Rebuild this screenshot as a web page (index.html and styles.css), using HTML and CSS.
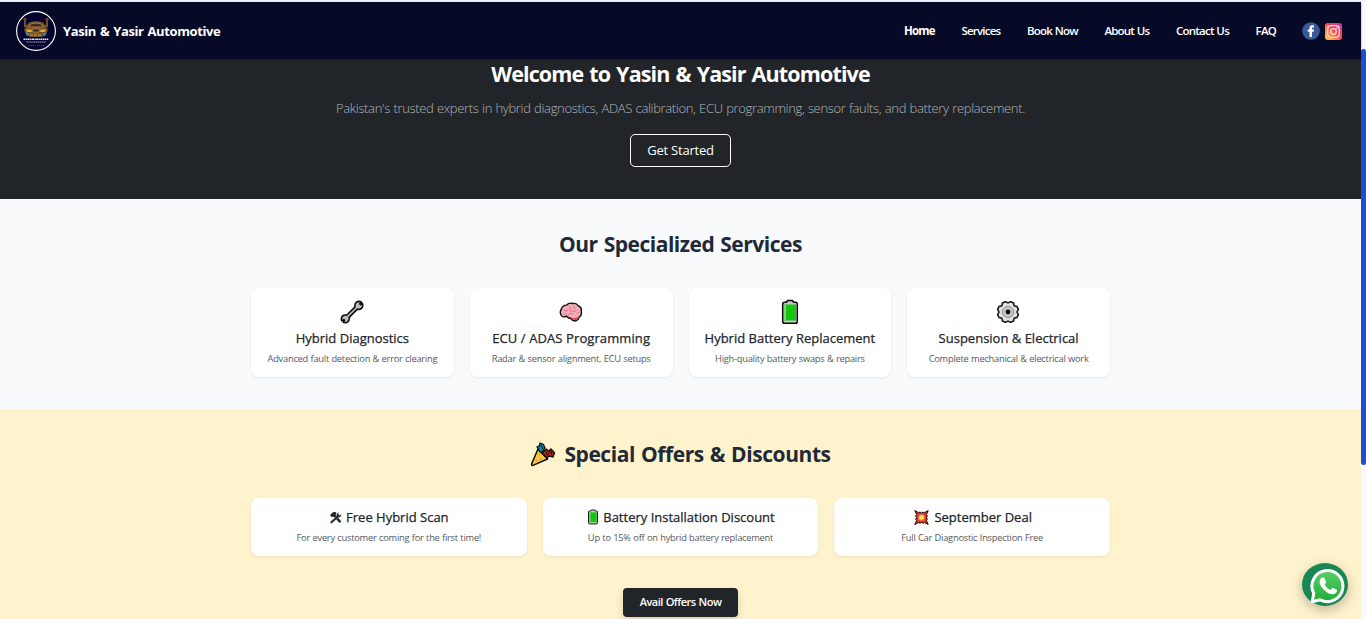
FILE: index.html
```html
<!DOCTYPE html>
<html lang="en">
<head>
<meta charset="utf-8">
<title>Yasin &amp; Yasir Automotive</title>
<link rel="stylesheet" href="styles.css">
</head>
<body>
<svg class="defs" width="0" height="0" aria-hidden="true">
  <symbol id="battery" viewBox="0 0 24 26">
    <path d="M6.500 3.200H8.500L9.500 1.500H14.500L15.500 3.200H17.500Q19.300 3.200 19.300 5V22.500Q19.300 24.300 17.500 24.300H6.500Q4.700 24.300 4.700 22.500V5Q4.700 3.200 6.500 3.200Z" fill="#c9c9c9" stroke="#0b0b0b" stroke-width="1.500"/>
    <rect x="6" y="5.500" width="12" height="16" fill="#16c60c"/>
    <rect x="6" y="5.500" width="2" height="16" fill="#7ed67a"/>
  </symbol>
</svg>
<div class="window">
  <div class="page">
    <header class="navbar">
      <a class="brand">
        <svg class="logo" viewBox="0 0 40 40">
          <circle cx="20" cy="20" r="19.400" fill="#03022e" stroke="#fff" stroke-width="1.100"/>
          <path d="M9 9V16M31 9V16" stroke="#a96c22" stroke-width="1.400"/>
          <path d="M7.500 8H10.500M29.500 8H32.500M9 14L13 18M31 14L27 18" stroke="#8d5a30" stroke-width="1.500"/>
          <path d="M13 11.500Q20 9 27 11.500L30 15L32 19L29.500 24.500L26 26H14L10.500 24.500L8 19L10 15Z" fill="#6d522f"/>
          <path d="M14.500 13Q20 10.800 25.500 13L27.500 16H12.500Z" fill="#3a2d2c" stroke="#c68128" stroke-width=".9"/>
          <path d="M10 18.500H15L16.500 21H11ZM30 18.500H25L23.500 21H29Z" fill="#f4a01e"/>
          <path d="M9 21.500L14 22.500L11.500 25ZM31 21.500L26 22.500L28.500 25Z" fill="#2788dc"/>
          <path d="M16 18H24L23 21H17Z" fill="#2d2a35" stroke="#c7832a" stroke-width=".8"/>
          <path d="M14 24H26" stroke="#e59a28" stroke-width="1" stroke-dasharray="3 1"/>
          <path d="M7.500 28.300H32.500" stroke="#e7e7f0" stroke-width="1.600" stroke-dasharray="2 .5 1.300 .4"/>
          <path d="M10.500 31H30" stroke="#aeb0c7" stroke-width="1.100" stroke-dasharray="1.400 .5"/>
          <path d="M12.500 34.500H19M21 34.500H29" stroke="#6e4824" stroke-width=".8" stroke-dasharray="1.500 .5"/>
        </svg>
        <span class="brand-name">Yasin &amp; Yasir Automotive</span>
      </a>
      <nav class="links">
        <a class="link home">Home</a>
        <a class="link">Services</a>
        <a class="link">Book Now</a>
        <a class="link">About Us</a>
        <a class="link">Contact Us</a>
        <a class="link">FAQ</a>
      </nav>
      <div class="social">
        <svg width="18" height="18" viewBox="0 0 18 18"><circle cx="9" cy="9" r="8.800" fill="#3b5998"/><path d="M7.500 15V9.800H5.800V7.500H7.500V6Q7.500 3.300 10.200 3.300H12V5.500H10.900Q10 5.500 10 6.400V7.500H12L11.700 9.800H10V15Z" fill="#fff"/></svg>
        <svg width="17" height="17" viewBox="0 0 17 17"><defs><linearGradient id="ig" x1="0" y1="1" x2="1" y2="0"><stop offset="0" stop-color="#ffd152"/><stop offset=".3" stop-color="#ff8a45"/><stop offset=".58" stop-color="#fb4350"/><stop offset="1" stop-color="#b936b8"/></linearGradient></defs><rect width="17" height="17" rx="3" fill="url(#ig)"/><rect x="2.700" y="2.700" width="11.600" height="11.600" rx="3.500" fill="none" stroke="#ffe3e0" stroke-width="1.200"/><circle cx="8.500" cy="8.500" r="2.800" fill="none" stroke="#ffe3e0" stroke-width="1.200"/><circle cx="12" cy="5" r=".8" fill="#fff"/></svg>
      </div>
    </header>

    <section class="hero">
      <h1>Welcome to Yasin &amp; Yasir Automotive</h1>
      <p class="lead">Pakistan's trusted experts in hybrid diagnostics, ADAS calibration, ECU programming, sensor faults, and battery replacement.</p>
      <a class="start"><span>Get Started</span></a>
    </section>

    <section class="services">
      <h2 class="services-title">Our Specialized Services</h2>
      <div class="cards four">
        <article class="card">
          <svg class="icon" viewBox="0 0 26 26"><path d="M18 2.200Q20.500 .8 23 2.200L21.400 4.200L22.300 5L24.200 3.500Q25.500 7 23.300 9Q21.400 10.700 18.800 9.900L9.900 18.800Q10.600 21.700 8.600 23.500Q6.500 25.400 3.500 24.200L4.900 22L4.200 21.300L2 22.600Q.7 19.500 2.700 17.500Q4.600 15.700 7.200 16.500L16.300 7.400Q15.500 4 18 2.200Z" fill="#bdbdbd" stroke="#0b0b0b" stroke-width="1.700" stroke-linejoin="round"/></svg>
          <h3>Hybrid Diagnostics</h3>
          <p>Advanced fault detection &amp; error clearing</p>
        </article>
        <article class="card">
          <svg class="icon" viewBox="0 0 26 26"><path d="M8 17.500Q4 19.500 2.300 16.500Q.4 13 2.500 10Q4 5.500 8 5.600Q11 2.500 14.800 3.800Q19 3 20.700 6.200Q24.800 8 24.100 12Q25.200 16 22 18.500Q20.500 22.500 17 22.800Q13.500 22 12.800 20Q10 19.500 8 17.500Z" fill="#f4abba" stroke="#0b0b0b" stroke-width="1.500"/><path d="M13.500 19.200Q17.500 20.200 22 18Q20.400 22 17 22Q14.500 21.600 13.500 19.200Z" fill="#e74856"/><path d="M5 11Q8 13 10 10M11 6Q13 8 12 11Q15 14 19 11M16 6Q15 9 18 9M10 17Q12 13 15 15.500M19 15L22 13M5 15Q7 14 8 16" fill="none" stroke="#e4798d" stroke-width="1.100"/></svg>
          <h3 class="wide">ECU / ADAS Programming</h3>
          <p>Radar &amp; sensor alignment, ECU setups</p>
        </article>
        <article class="card">
          <svg class="icon"><use href="#battery"/></svg>
          <h3>Hybrid Battery Replacement</h3>
          <p>High-quality battery swaps &amp; repairs</p>
        </article>
        <article class="card">
          <svg class="icon gear" viewBox="0 0 26 26"><path d="M10.200 1.800L13 3.200L15.800 1.800L19 3.200L19.700 6.300L22.800 7L24.200 10.200L22.800 13L24.200 15.800L22.800 19L19.700 19.700L19 22.800L15.800 24.200L13 22.800L10.200 24.200L7 22.800L6.300 19.700L3.200 19L1.800 15.800L3.200 13L1.800 10.200L3.200 7L6.300 6.300L7 3.200Z" fill="#dedede" stroke="#0b0b0b" stroke-width="1.600" stroke-linejoin="round"/><circle cx="13" cy="13" r="6" fill="#c8c8c8" stroke="#777" stroke-width=".8"/><circle cx="13" cy="13" r="2.600" fill="#0b0b0b"/></svg>
          <h3>Suspension &amp; Electrical</h3>
          <p>Complete mechanical &amp; electrical work</p>
        </article>
      </div>
    </section>

    <section class="offers">
      <h2 class="offers-title"><svg class="party" viewBox="0 0 26 26"><path d="M8 8L17.500 18L3 24.400Q1.300 24.800 1.600 23Z" fill="#ffc83d" stroke="#0b0b0b" stroke-width="1.500" stroke-linejoin="round"/><path d="M10 11L7 6L9.500 4.500L10 2L13.500 3.500L15 7L12 11Z" fill="#0087aa" stroke="#0b0b0b" stroke-width="1.200"/><path d="M12 12L16 8L19 10L21 8L24.500 12L23 16L19 15L17 17L14 14Z" fill="#a92b18" stroke="#0b0b0b" stroke-width="1.300"/><path d="M11 4L13 8M16 10L17 14L21 10L22 14" fill="none" stroke="#151515"/><path d="M9 13L10 14M6 19L7 20" stroke="#ea7c28" stroke-width="1.500"/><path d="M10 18H12" stroke="#4ac58b" stroke-width="1.300"/></svg><span>Special Offers &amp; Discounts</span></h2>
      <div class="cards three">
        <article class="card">
          <h3><svg class="tools" viewBox="0 0 13 13"><path d="M1 4L4 1.200Q7 .6 7.500 2L6.500 3.500L12.300 10.500L10.700 12L4.300 5.500L2.800 6.300Z" fill="#212529"/><path d="M1 11L7.500 5.200Q6.900 2.300 10 1.100L9.300 3L10.600 4.200L12.300 3.300Q12.500 6.500 9.200 6.700L2.700 12.500Q1.200 12.600 1 11Z" fill="#212529" stroke="#fff" stroke-width=".3"/></svg><span>Free Hybrid Scan</span></h3>
          <p>For every customer coming for the first time!</p>
        </article>
        <article class="card">
          <h3 class="shifted"><svg class="mini-battery" viewBox="4 0 16 26"><use href="#battery" width="24" height="26"/></svg><span>Battery Installation Discount</span></h3>
          <p>Up to 15% off on hybrid battery replacement</p>
        </article>
        <article class="card">
          <h3 class="shifted"><svg class="boom" viewBox="0 0 15 15"><path d="M.8 .6L4.700 2.700L6 2L7.500 3L9 2L10.300 2.700L14.200 .6L12.500 4.500L13.300 6L12.500 7.500L13.300 9L12.500 10.500L14.200 14.400L10.300 12.500L9 13.200L7.500 12.400L6 13.200L4.700 12.500L.8 14.400L2.600 10.500L1.700 9L2.600 7.500L1.700 6L2.600 4.500Z" fill="#e82f2b" stroke="#111" stroke-width="1"/><path d="M7.500 3.500L9 5.100L11 4.600L10.300 6.500L11.500 8L10 9L10.500 11L8.300 10.300L7 11.600L6 10L4 10.500L4.800 8.500L3.500 7L5 6L4.500 4.500L6.300 5Z" fill="#ff8c34"/><circle cx="7.500" cy="7.500" r="2.200" fill="#ffe878"/></svg><span>September Deal</span></h3>
          <p>Full Car Diagnostic Inspection Free</p>
        </article>
      </div>
      <a class="avail"><span>Avail Offers Now</span></a>
    </section>
  </div>
  <div class="scrollbar"><div class="thumb"></div></div>
</div>
<a class="whatsapp">
  <svg width="36" height="36" viewBox="0 0 36 36"><defs><linearGradient id="wa" x1="0" y1="0" x2="0" y2="1"><stop offset="0" stop-color="#58cf66"/><stop offset="1" stop-color="#20ac38"/></linearGradient></defs><path d="M3.800 25.500A15.500 15.500 0 1 1 10.200 31.800L2.200 33.800Z" fill="url(#wa)" stroke="#fff" stroke-width="3" stroke-linejoin="round"/><path d="M11.900 9.600H13.600Q14.400 9.700 14.700 10.600L16 13.800Q16.300 14.600 15.700 15.300L14.600 16.700Q16.700 20.300 20.400 22L22 20.200Q22.600 19.600 23.400 20L26.500 21.600Q27.300 22 27 23Q26.300 26 22.700 26.300Q19 26.500 14.100 22Q9.500 17.500 9.600 13.700Q9.700 10.600 11.900 9.600Z" fill="#fff"/></svg>
</a>
</body>
</html>
```
FILE: styles.css
```css
* { box-sizing: border-box; }
body { margin: 0; height: 619px; overflow: hidden; font-family: "Open Sans", "Noto Sans", sans-serif; color: #212529; }
h1, h2, h3, p { margin: 0; white-space: nowrap; }
svg { display: block; flex: none; }
.defs { position: absolute; }
.window { display: flex; height: 619px; border-top: 2px solid #eef3fc; }
.page { flex: 1; min-width: 0; display: flex; flex-direction: column; }
.scrollbar { width: 5px; background: #f8fafc; padding-top: 47px; }
.thumb { height: 416px; border-radius: 3px; background: #1d4ed8; }

.navbar { height: 57px; background: #060a27; display: flex; align-items: center; padding: 1px 19px 0 16px; color: #fff; font-weight: 700; white-space: nowrap; box-shadow: 0 1px 2px #0006; z-index: 1; }
.brand { display: flex; align-items: center; gap: 7px; }
.logo { width: 40px; height: 40px; }
.brand-name { font-size: 13px; letter-spacing: -.38px; word-spacing: .9px; }
.links { margin-left: auto; display: flex; gap: 26.6px; font-size: 11.5px; font-weight: 600; letter-spacing: -.78px; word-spacing: .5px; padding-bottom: 2px; }
.home { font-weight: 700; }
.social { display: flex; align-items: center; gap: 5px; margin-left: 26px; }

.hero { height: 140px; background: #212529; color: #fff; display: flex; flex-direction: column; align-items: center; }
h1 { font-size: 21.5px; line-height: 28px; margin-top: 1px; font-weight: 700; letter-spacing: -.87px; word-spacing: 1.2px; }
.lead { font-size: 13px; line-height: 20px; margin-top: 10px; color: #b2b5b8; font-weight: 300; letter-spacing: -.34px; word-spacing: .5px; }
.start { width: 101px; height: 33px; margin-top: 16px; border: 1px solid #fff; border-radius: 5px; display: flex; align-items: center; justify-content: center; font-size: 13px; letter-spacing: -.2px; padding-bottom: 2px; white-space: nowrap; }

.services { height: 210px; background: #f8fafc; padding: 30px 251px 0; }
.offers { height: 210px; background: #fff3cd; padding: 30px 251px 0; display: flex; flex-direction: column; }
h2 { font-size: 21px; line-height: 30px; font-weight: 700; letter-spacing: -.48px; word-spacing: 1px; color: #1f2937; display: flex; justify-content: center; align-items: center; }
.offers-title { letter-spacing: -.43px; }
.cards { display: grid; gap: 16px; width: 859px; margin-top: 29px; }
.four { grid-template-columns: repeat(4, minmax(0, 1fr)); }
.three { grid-template-columns: repeat(3, minmax(0, 1fr)); }
.card { background: #fff; border-radius: 8px; box-shadow: 0 1px 3px #00000014; display: flex; flex-direction: column; align-items: center; }
.four .card { height: 89px; padding-top: 11px; }
.three .card { height: 58px; padding-top: 9px; }
.icon { width: 24px; height: 26px; }
.gear { margin-right: 2px; }
h3 { display: flex; align-items: center; font-size: 13px; line-height: 20px; font-weight: 500; -webkit-text-stroke: .25px; }
.four h3 { margin-top: 3px; }
.wide { letter-spacing: .1px; }
.shifted { padding-left: 2px; }
.card p { font-size: 9.3px; line-height: 14px; margin-top: 4px; color: #55595c; letter-spacing: -.24px; word-spacing: .3px; }
.party { width: 26px; height: 26px; margin-right: 8px; }
.tools { width: 13px; height: 13px; margin-right: 4px; }
.mini-battery { width: 10px; height: 16px; margin-right: 5px; }
.boom { width: 15px; height: 15px; margin-right: 5px; }
.avail { align-self: center; width: 115px; height: 29px; margin-top: 32px; border-radius: 4px; background: #212529; color: #fff; font-size: 11px; font-weight: 600; letter-spacing: -.5px; word-spacing: .5px; padding-bottom: 2px; display: flex; align-items: center; justify-content: center; white-space: nowrap; box-shadow: 0 4px 8px #00000024; }
.whatsapp { position: fixed; left: 1302px; top: 563px; width: 46px; height: 43px; border-radius: 50%; background: #198754; padding: 5px 0 0 8px; box-shadow: 0 4px 12px #00000040; }
```
